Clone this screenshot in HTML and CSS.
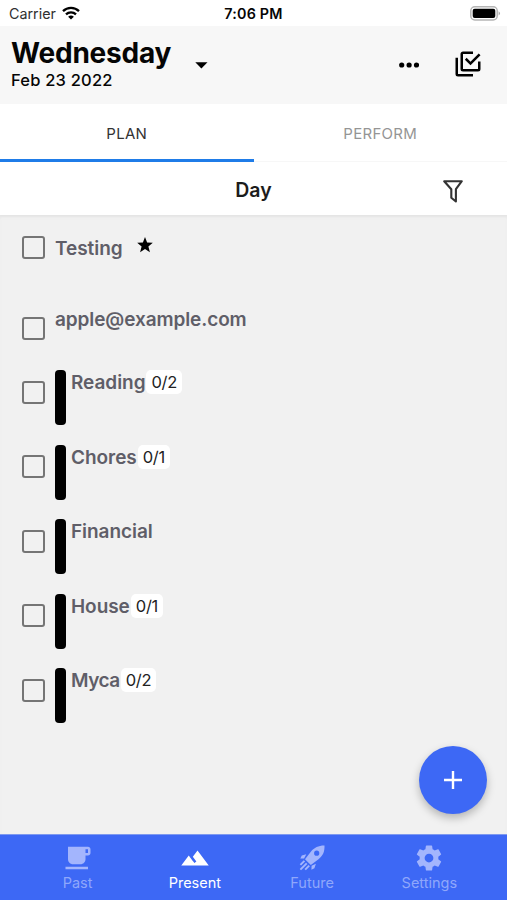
FILE: index.html
```html
<!DOCTYPE html>
<html lang="en">
<head>
<meta charset="utf-8">
<title>Planner</title>
<link rel="stylesheet" href="styles.css">
</head>
<body>
<div class="app">
  <div class="status">
    <div class="carrier"><span>Carrier</span>
      <svg width="18" height="14" viewBox="0 0 18 14" fill="none" stroke="#000" stroke-width="2.3"><path d="M1 5.2a11.5 11.5 0 0 1 16 0M4 8.4a7.2 7.2 0 0 1 10 0"/><path d="M9 13.6 6.1 10.8a4.2 4.2 0 0 1 5.8 0z" fill="#000" stroke="none"/></svg>
    </div>
    <div class="clock">7:06 PM</div>
    <svg class="battery" width="31" height="15" viewBox="0 0 31 15"><rect x=".8" y=".8" width="26.4" height="13.2" rx="4" fill="#fff" stroke="#b5b5b5" stroke-width="1.5"/><rect x="2.7" y="2.8" width="22.6" height="9.3" rx="2" fill="#000"/><path d="M28.6 5.2q2.8 2.2 0 4.4z" fill="#aaa"/></svg>
  </div>
  <header class="header">
    <div class="date"><h1>Wednesday</h1><p>Feb 23 2022</p></div>
    <svg class="caret" width="13" height="7" viewBox="0 0 13 7"><path d="M.3.3h12.2L6.4 6.6z"/></svg>
    <svg class="dots" width="20" height="6" viewBox="0 0 20 6"><circle cx="2.7" cy="3" r="2.6"/><circle cx="10.1" cy="3" r="2.6"/><circle cx="17.5" cy="3" r="2.6"/></svg>
    <svg class="multi" width="30" height="30" viewBox="0 0 24 24"><path d="M20 16v-6h2v6a2 2 0 0 1-2 2H8a2 2 0 0 1-2-2V4c0-1.110.89-2 2-2h8v2H8v12h12M10.910 7.080 14 10.170l6.590-6.590L22 5l-8 8-4.500-4.500 1.410-1.420M16 20v2H4a2 2 0 0 1-2-2V7h2v13h12z"/></svg>
  </header>
  <nav class="tabs"><div class="tab active">PLAN</div><div class="tab">PERFORM</div></nav>
  <div class="daybar"><h2>Day</h2>
    <svg width="22" height="24" viewBox="0 0 22 24" fill="none" stroke="#333" stroke-width="2.1" stroke-linejoin="round"><path d="M2.200 2.200h17.600l-5.900 8v12.300l-4.600-3.800v-8.500z"/></svg>
  </div>
  <main class="list">
    <div class="row plain starred"><i class="box"></i><span class="name">Testing</span>
      <svg class="star" width="16" height="16" viewBox="0 0 16 16"><path d="m8 0 2.100 5.500 5.700.3-4.400 3.700 1.500 5.800L8 12.100l-4.900 3.200 1.500-5.800L.2 5.800l5.700-.3z"/></svg></div>
    <div class="row plain mail"><i class="box"></i><span class="name">apple@example.com</span></div>
    <div class="row"><i class="box"></i><i class="bar"></i><span class="name">Reading</span><b class="count">0/2</b></div>
    <div class="row"><i class="box"></i><i class="bar"></i><span class="name">Chores</span><b class="count">0/1</b></div>
    <div class="row"><i class="box"></i><i class="bar"></i><span class="name">Financial</span></div>
    <div class="row"><i class="box"></i><i class="bar"></i><span class="name">House</span><b class="count">0/1</b></div>
    <div class="row"><i class="box"></i><i class="bar"></i><span class="name tight">Myca</span><b class="count">0/2</b></div>
    <div class="fab"><svg width="18" height="18" viewBox="0 0 18 18" stroke="#fff" stroke-width="2.400"><path d="M9 0v18M0 9h18"/></svg></div>
  </main>
  <footer class="nav">
    <div class="item"><svg width="30" height="30" viewBox="0 0 24 24"><path d="M20 3H4v10c0 2.210 1.790 4 4 4h6c2.210 0 4-1.790 4-4v-3h2c1.110 0 2-.89 2-2V5c0-1.110-.89-2-2-2zm0 5h-2V5h2v3zM2 21h18v-2H2v2z"/></svg><span>Past</span></div>
    <div class="item on"><svg width="30" height="30" viewBox="0 0 24 24"><path d="m14 6-3.750 5 2.850 3.800-1.600 1.200C9.810 13.750 7 10 7 10l-6 8h22L14 6z"/></svg><span>Present</span></div>
    <div class="item"><svg width="30" height="30" viewBox="0 0 30 30"><path fill-rule="evenodd" d="M27.500 2.600C21.500 2.500 17.400 4.800 14 8.500L8 16.200l5.800 5.800 7.700-5.700c4.800-3.600 6.200-8 6-13.700zM19.700 7.600a2.600 2.600 0 1 1 0 5.200 2.600 2.600 0 0 1 0-5.200z"/><path d="M9.300 11.200 4.800 12.600 3.300 15.600l3.800-.1zM18.900 20.700 17.400 25.200l-3 1.500.2-3.900z"/><path d="M7.400 17.800 3.400 21.800M9.700 20.300 3.400 26.600M12.200 22.600 8.200 26.600" fill="none" stroke="#a3b5fd" stroke-width="1.900"/></svg><span>Future</span></div>
    <div class="item"><svg width="30" height="30" viewBox="0 0 24 24"><path d="M12 15.500A3.500 3.500 0 0 1 8.500 12 3.500 3.500 0 0 1 12 8.500a3.500 3.500 0 0 1 3.500 3.500 3.500 3.500 0 0 1-3.500 3.500m7.430-2.530c.04-.32.070-.64.070-.97s-.03-.66-.07-1l2.110-1.630c.19-.15.240-.42.120-.64l-2-3.460c-.12-.22-.39-.31-.61-.22l-2.490 1c-.52-.39-1.060-.73-1.690-.98l-.37-2.650A.506.506 0 0 0 14 2h-4c-.25 0-.46.180-.5.420l-.37 2.650c-.63.250-1.170.590-1.690.98l-2.490-1c-.22-.09-.49 0-.61.220l-2 3.460c-.13.220-.07.490.120.640L4.570 11c-.04.340-.07.670-.07 1s.03.650.070.970l-2.110 1.660c-.19.150-.25.420-.12.640l2 3.460c.12.220.390.300.610.220l2.490-1.010c.52.400 1.060.740 1.690.990l.37 2.650c.04.240.250.420.500.420h4c.25 0 .46-.18.500-.42l.37-2.650c.63-.26 1.170-.59 1.690-.99l2.490 1.010c.22.080.490 0 .61-.22l2-3.460c.12-.22.070-.49-.12-.64l-2.110-1.660z"/></svg><span>Settings</span></div>
  </footer>
</div>
</body>
</html>
```
FILE: styles.css
```css
* { box-sizing: border-box; margin: 0; padding: 0; }
body { font-family: Inter, "Liberation Sans", sans-serif; background: #fff; color: #050505; }
svg { display: block; flex: none; }
.app { width: 507px; height: 900px; display: flex; flex-direction: column; overflow: hidden; }

.status { height: 26px; display: grid; grid-template-columns: 1fr auto 1fr; align-items: center; padding: 1px 6px 0 6px; }
.carrier { display: flex; align-items: center; gap: 6px; padding-left: 3px; font-size: 14.3px; color: #303030; }
.carrier svg { margin-top: -2px; }
.clock { font-size: 14.3px; font-weight: 600; letter-spacing: .2px; }
.battery { justify-self: end; }

.header { height: 78px; background: #f7f7f7; display: flex; align-items: flex-start; padding: 11px 24px 0 11px; }
.date { width: 184px; }
h1 { font-size: 28px; line-height: 32px; font-weight: 700; letter-spacing: -.2px; }
.date p { font-size: 16.5px; line-height: 23px; font-weight: 500; letter-spacing: .2px; }
.caret { margin-top: 25px; }
.dots { margin: 25px 34px 0 auto; }
.multi { margin-top: 12px; }

.tabs { height: 58px; display: flex; border-bottom: 1px solid #f7f7f7; }
.tab { flex: 1; text-align: center; font-size: 15px; line-height: 59px; letter-spacing: .3px; color: #959595; }
.tab.active { color: #333; border-bottom: 3px solid #1f7ce8; height: 58px; }

.daybar { height: 53px; display: flex; align-items: center; justify-content: center; position: relative; padding-top: 2px; }
.daybar h2 { font-size: 19.5px; font-weight: 600; color: #1c1c1c; }
.daybar svg { position: absolute; right: 43px; top: 17px; }

.list { flex: 1; position: relative; background: #f1f1f1; padding: 21px 0 0 21.5px; box-shadow: inset 0 3px 3px -1px #e4e4e4; }
.row { display: flex; align-items: flex-start; height: 55px; margin-bottom: 19.5px; }
.box { width: 23px; height: 23px; border: 2px solid #757575; border-radius: 3px; margin: 10.5px 10.5px 0 0; flex: none; }
.bar { width: 11px; height: 55px; background: #000; border-radius: 4px; margin-right: 5px; flex: none; }
.name { font-size: 19px; line-height: 25px; font-weight: 600; letter-spacing: -.05px; color: #5f5e68; white-space: nowrap; }
.tight { letter-spacing: -.5px; }
.plain .box { margin-top: 0; }
.row.starred { height: 71px; margin: 0; }
.row.mail { height: 63px; margin: 0; }
.mail .name { letter-spacing: -.1px; }
.mail .box { margin-top: 10px; }
.star { margin: 1px 0 0 14px; }
.count { height: 24px; margin-left: 1px; padding: 0 5px; background: #fff; border-radius: 5px; font-size: 16.5px; line-height: 24px; font-weight: 400; letter-spacing: -.3px; color: #222; }

.fab { position: absolute; right: 20px; bottom: 20px; width: 68px; height: 68px; border-radius: 50%; background: #3d68f5; display: flex; align-items: center; justify-content: center; box-shadow: 0 4px 8px rgba(0,0,0,.25); }

.nav { height: 66px; background: #3d68f5; border-top: 1px solid #7e99ef; display: flex; padding: 8px 19px 0; }
.item { flex: 1; display: flex; flex-direction: column; align-items: center; color: #8fa7fb; font-size: 14.5px; line-height: 19px; }
.item svg { fill: #a3b5fd; }
.item.on { color: #fff; }
.item.on svg { fill: #fff; }
```
